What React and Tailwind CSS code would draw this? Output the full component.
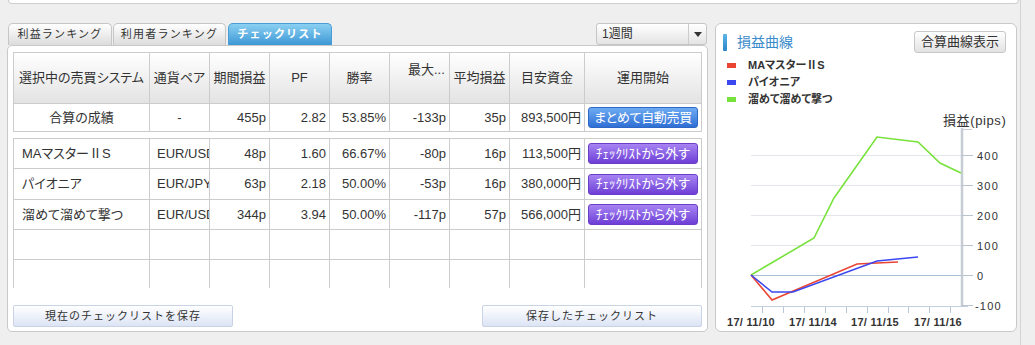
import React from "react";

const GRID = "grid grid-cols-[136px_60px_60px_60px_60px_60px_60px_75px_117px]";
const CELL = "border-r border-b border-[#cccccc] flex items-center overflow-hidden whitespace-nowrap";

function Tab({ children, active, w }) {
  const base =
    "h-[22px] rounded-t-[5px] border border-b-0 flex items-center justify-center text-[11px] tracking-[1.2px] " + w;
  const look = active
    ? " border-[#4a9dd4] bg-linear-to-b from-[#8ad0f2] to-[#3b98d5] text-white font-bold"
    : " border-[#c6c6c6] bg-linear-to-b from-white to-[#dcdcdc] text-[#333]";
  return <div className={base + look}>{children}</div>;
}

function PurpleBtn() {
  return (
    <div className="ml-[3px] w-[110px] h-[21px] rounded-[3px] border border-[#6b3ec9] bg-linear-to-b from-[#a783f2] to-[#6f3dd6] text-white text-[13px] flex items-center justify-center [font-feature-settings:'palt']">
      ﾁｪｯｸﾘｽﾄから外す
    </div>
  );
}

const rows = [
  ["MAマスターⅡS", "EUR/USD", "48p", "1.60", "66.67%", "-80p", "16p", "113,500円"],
  ["パイオニア", "EUR/JPY", "63p", "2.18", "50.00%", "-53p", "16p", "380,000円"],
  ["溜めて溜めて撃つ", "EUR/USD", "344p", "3.94", "50.00%", "-117p", "57p", "566,000円"],
];
const rowHeights = ["h-[30px]", "h-[31px]", "h-[30px]", "h-[30px]", "h-[31px]"];

function DataRow({ r, h }) {
  return (
    <>
      <div className={CELL + " " + h + " justify-start pl-[8px]"}>{r ? r[0] : ""}</div>
      <div className={CELL + " " + h + " justify-start pl-[7px]"}>{r ? r[1] : ""}</div>
      {[2, 3, 4, 5, 6, 7].map((i) => (
        <div key={i} className={CELL + " " + h + " justify-end pr-[3px]"}>
          {r ? r[i] : ""}
        </div>
      ))}
      <div className={CELL + " " + h + " justify-start"}>{r ? <PurpleBtn /> : null}</div>
    </>
  );
}

function Chart() {
  const grid = [47.5, 77.5, 107.5, 137.5];
  const yl = [
    ["400", 47.5],
    ["300", 77.5],
    ["200", 107.5],
    ["100", 137.5],
    ["0", 167.5],
    ["-100", 197.5],
  ];
  const xt = [46, 67, 88, 109, 130, 151, 172, 192, 213, 234];
  const xl = [
    ["17/ 11/10", 35],
    ["17/ 11/14", 97],
    ["17/ 11/15", 159],
    ["17/ 11/16", 222],
  ];
  return (
    <svg width="300" height="223" viewBox="0 0 300 223" className="block">
      {grid.map((y) => (
        <line key={y} x1="35" x2="246" y1={y} y2={y} stroke="#e3e6ea" strokeWidth="1" />
      ))}
      <line x1="35" x2="246" y1="167.5" y2="167.5" stroke="#a9bfd6" strokeWidth="1" />
      <line x1="35" x2="252" y1="198.5" y2="198.5" stroke="#c3d0de" strokeWidth="1" />
      <line x1="246" x2="246" y1="20" y2="199" stroke="#c6ccd3" strokeWidth="2.5" />
      <line x1="246" x2="256" y1="21.5" y2="21.5" stroke="#c6ccd3" strokeWidth="1" />
      {yl.map(([t, y]) => (
        <line key={"t" + t} x1="246" x2="257" y1={y} y2={y} stroke="#b9c3cd" strokeWidth="1" />
      ))}
      {xt.map((x) => (
        <line key={x} x1={x + 0.5} x2={x + 0.5} y1="199" y2="205" stroke="#b8c8d8" strokeWidth="1" />
      ))}
      {yl.map(([t, y]) => (
        <text key={t} x={t === "-100" ? 259 : 261} y={y + 4} fontSize="11" letterSpacing="1.2" fill="#333">
          {t}
        </text>
      ))}
      <text x="227" y="17" fontSize="13" letterSpacing="0.6" fill="#333">
        損益(pips)
      </text>
      {xl.map(([t, x]) => (
        <text key={t} x={x} y="218" fontSize="11" fontWeight="bold" letterSpacing="0.3" textAnchor="middle" fill="#333">
          {t}
        </text>
      ))}
      <polyline
        points="35,167 98,130 118,90 161,29 202,34 224,55 245,65"
        fill="none"
        stroke="#78e23c"
        strokeWidth="1.6"
      />
      <polyline points="35,167 56,192 141,156 161,155 182,154" fill="none" stroke="#ea4432" strokeWidth="1.6" />
      <polyline points="35,167 56,184 77,184 161,153 202,149" fill="none" stroke="#3b47ef" strokeWidth="1.6" />
    </svg>
  );
}

export default function App() {
  return (
    <div className="w-[1035px] h-[345px] bg-[#efefef] overflow-hidden font-[Liberation_Sans,Noto_Sans_CJK_JP,sans-serif] text-[#333]">
      <div className="w-[1021px] h-full border-r border-[#d4d4d4]">
        <div className="ml-[8px] w-[1011px] h-[4px] bg-white border border-t-0 border-[#cfcfcf] rounded-b-[5px]" />
        <div className="flex mt-[19px]">
          {/* left column */}
          <div className="ml-[7px] w-[701px] flex flex-col">
            <div className="flex items-end h-[22px]">
              <div className="ml-[1px] flex items-end gap-[1px]">
                <Tab w="w-[104px]">利益ランキング</Tab>
                <Tab w="w-[113px]">利用者ランキング</Tab>
                <div className="ml-[1px]">
                  <Tab w="w-[104px]" active>
                    チェックリスト
                  </Tab>
                </div>
              </div>
              <div className="ml-auto mr-[1px] w-[111px] h-[22px] flex items-center border border-[#c6c6c6] rounded-[3px] bg-linear-to-b from-white to-[#e4e4e4]">
                <span className="flex-1 pl-[5px] text-[12px]">1週間</span>
                <div className="w-[18px] h-full border-l border-[#cccccc] flex items-center justify-center">
                  <svg width="8" height="5" viewBox="0 0 8 5">
                    <polygon points="0,0 8,0 4,5" fill="#333" />
                  </svg>
                </div>
              </div>
            </div>
            <div className="h-[287px] bg-white border border-[#c9c9c9] rounded-[5px] px-[5px] pt-[6px] flex flex-col [font-feature-settings:'palt']">
              {/* summary table */}
              <div className={GRID + " border-t border-l border-[#cccccc] text-[13px]"}>
                {["選択中の売買システム", "通貨ペア", "期間損益", "PF", "勝率"].map((t) => (
                  <div key={t} className={CELL + " h-[51px] justify-center bg-linear-to-b from-white to-[#e3e3e3]"}>
                    {t}
                  </div>
                ))}
                <div className={CELL + " h-[51px] items-start pt-[7px] pl-[18px] bg-linear-to-b from-white to-[#e3e3e3]"}>
                  最大...
                </div>
                {["平均損益", "目安資金", "運用開始"].map((t) => (
                  <div key={t} className={CELL + " h-[51px] justify-center bg-linear-to-b from-white to-[#e3e3e3]"}>
                    {t}
                  </div>
                ))}
                <div className={CELL + " h-[28px] justify-center"}>合算の成績</div>
                <div className={CELL + " h-[28px] justify-center"}>-</div>
                {["455p", "2.82", "53.85%", "-133p", "35p", "893,500円"].map((t) => (
                  <div key={t} className={CELL + " h-[28px] justify-end pr-[3px]"}>
                    {t}
                  </div>
                ))}
                <div className={CELL + " h-[28px] justify-start"}>
                  <div className="ml-[3px] w-[110px] h-[21px] rounded-[3px] border border-[#2f68c4] bg-linear-to-b from-[#6eabf2] to-[#2f6fd5] text-white text-[13px] tracking-[-0.3px] flex items-center justify-center">
                    まとめて自動売買
                  </div>
                </div>
              </div>
              {/* checklist table */}
              <div className="mt-[6px] h-[150px] overflow-hidden">
                <div className={GRID + " border-t border-l border-[#cccccc] text-[13px]"}>
                  {rowHeights.map((h, i) => (
                    <DataRow key={i} r={rows[i]} h={h} />
                  ))}
                </div>
              </div>
              <div className="mt-[17px] flex justify-between">
                <div className="w-[220px] h-[22px] border border-[#c9d3e6] rounded-[2px] bg-linear-to-b from-white to-[#dce4f5] flex items-center justify-center text-[11px] tracking-[1px] [font-feature-settings:normal]">
                  現在のチェックリストを保存
                </div>
                <div className="w-[220px] h-[22px] border border-[#c9d3e6] rounded-[2px] bg-linear-to-b from-white to-[#dce4f5] flex items-center justify-center text-[11px] tracking-[1px] [font-feature-settings:normal]">
                  保存したチェックリスト
                </div>
              </div>
            </div>
          </div>
          {/* right panel */}
          <div className="ml-[7px] w-[302px] h-[309px] bg-white border border-[#c9c9c9] rounded-[6px] flex flex-col">
            <div className="mt-[7px] ml-[7px] mr-[10px] h-[22px] flex items-center justify-between">
              <div className="flex items-center">
                <div className="w-[4px] h-[17px] rounded-[1px] bg-linear-to-b from-[#5fb6ea] to-[#2a84c6]" />
                <span className="ml-[10px] text-[14px] text-[#3a8bcb]">損益曲線</span>
              </div>
              <div className="w-[92px] h-[22px] border border-[#c8c8c8] rounded-[3px] bg-linear-to-b from-white to-[#e2e2e2] flex items-center justify-center text-[13px]">
                合算曲線表示
              </div>
            </div>
            <div className="mt-[4px] ml-[11px] flex flex-col text-[11px] font-bold [font-feature-settings:'palt']">
              {[
                ["bg-[#ea4432]", "MAマスターⅡS"],
                ["bg-[#3b47ef]", "パイオニア"],
                ["bg-[#78e23c]", "溜めて溜めて撃つ"],
              ].map(([c, t]) => (
                <div key={t} className="h-[17px] flex items-center">
                  <div className={"w-[9px] h-[5px] " + c} />
                  <span className="ml-[12px]">{t}</span>
                </div>
              ))}
            </div>
            <Chart />
          </div>
        </div>
      </div>
    </div>
  );
}
